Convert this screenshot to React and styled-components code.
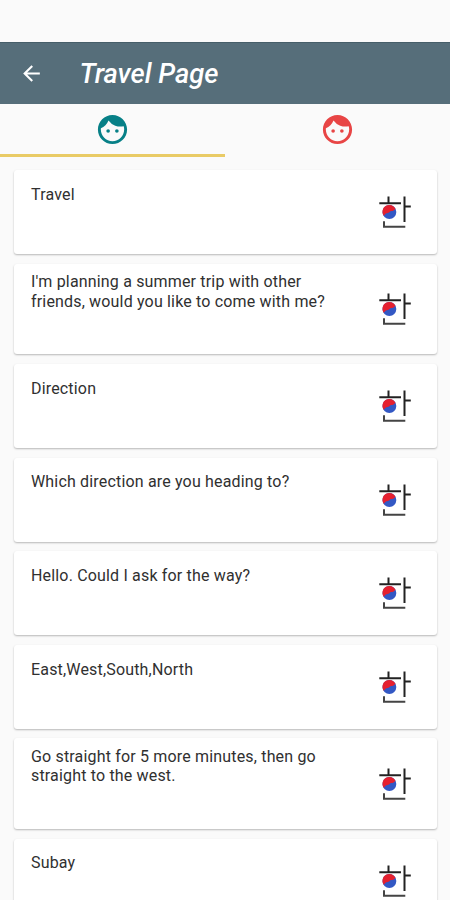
import React from "react";
import styled, { createGlobalStyle } from "styled-components";
import { MdArrowBack, MdFace } from "react-icons/md";

const phrases = [
    "Travel",
    "I'm planning a summer trip with other friends, would you like to come with me?",
    "Direction",
    "Which direction are you heading to?",
    "Hello. Could I ask for the way?",
    "East,West,South,North",
    "Go straight for 5 more minutes, then go straight to the west.",
    "Subay",
];

//Style
const GlobalStyle = createGlobalStyle`
    body {
        margin: 0;
        background-color: #fafafa;
        font-family: Roboto, "Liberation Sans", sans-serif;
    }

    * {
        box-sizing: border-box;
    }
`;

const Screen = styled.div`
    display: flex;
    flex-direction: column;
    height: 900px;
    overflow: hidden;
    background-color: #fafafa;
`;

const StatusBar = styled.div`
    flex: none;
    height: 42px;
`;

const Toolbar = styled.header`
    flex: none;
    display: flex;
    align-items: center;
    gap: 35.5px;
    height: 62px;
    padding-left: 19px;
    background-color: #566e7a;
    border-top: 1px solid #465e69;
    color: white;
`;

const BackButton = styled.button`
    display: flex;
    padding: 0;
    border: none;
    background: none;
    color: inherit;
    cursor: pointer;
`;

const Title = styled.h1`
    margin: 0;
    font-size: 27.3px;
    font-style: italic;
    font-weight: 500;
    line-height: 32px;
    white-space: nowrap;
`;

const Tabs = styled.nav`
    flex: none;
    display: flex;
    height: 53px;
`;

const Tab = styled.button`
    flex: 1;
    display: flex;
    align-items: center;
    justify-content: center;
    padding: 0;
    border: none;
    border-bottom: 3px solid ${(props) => (props.$active ? "#e9cb66" : "transparent")};
    background: none;
    color: ${(props) => props.$color};
    cursor: pointer;
`;

const PhraseList = styled.ul`
    display: flex;
    flex-direction: column;
    gap: 9.6px;
    margin: 0;
    padding: 13px 13px 0 14px;
    list-style-type: none;
`;

const PhraseCard = styled.li`
    flex: none;
    display: flex;
    align-items: center;
    justify-content: space-between;
    min-height: 84px;
    padding: 8.4px 26px 8.4px 17px;
    border-radius: 3px;
    background-color: white;
    box-shadow: 0 1px 2px rgba(0, 0, 0, 0.27);
`;

const PhraseText = styled.p`
    width: 310px;
    margin: 0;
    padding-bottom: 34.8px;
    color: #303030;
    font-size: 16px;
    letter-spacing: 0.17px;
    line-height: 19.6px;
`;

const HangulSvg = styled.svg`
    flex: none;
    width: 32px;
    height: 32px;
`;

function HangulIcon() {
    return (
        <HangulSvg viewBox="0 0 32 32" fill="none" stroke="#222222" strokeWidth="2">
            <path d="M9.5 0.6v6M0.3 7.2h21.7" />
            <path d="M25.5 0.6v25.4M25.5 10.6h6.3" />
            <path d="M5 25.3v5.5h21.3" stroke="#444444" />
            <circle cx="10.4" cy="16" r="6.9" fill="#3358c4" stroke="none" />
            <path
                d="M4.6 19.7A6.9 6.9 0 1 1 16.6 13C15.2 13.4 14.5 15.2 13 15C11.6 14.8 11.2 15.4 10.4 16.2C9.2 17.4 8 16.6 6.9 17.6C6 18.4 5.4 19.4 4.6 19.7z"
                fill="#e5202f"
                stroke="none"
            />
        </HangulSvg>
    );
}

function App() {
    return (
        <>
            <GlobalStyle />
            <Screen>
                <StatusBar />
                <Toolbar>
                    <BackButton aria-label="Back">
                        <MdArrowBack size={25} />
                    </BackButton>
                    <Title>Travel Page</Title>
                </Toolbar>
                <Tabs>
                    <Tab $active $color="#078087" aria-label="First speaker">
                        <MdFace size={35} />
                    </Tab>
                    <Tab $color="#e84545" aria-label="Second speaker">
                        <MdFace size={35} />
                    </Tab>
                </Tabs>
                <PhraseList>
                    {phrases.map((phrase) => (
                        <PhraseCard key={phrase}>
                            <PhraseText>{phrase}</PhraseText>
                            <HangulIcon />
                        </PhraseCard>
                    ))}
                </PhraseList>
            </Screen>
        </>
    );
}

export default App;
